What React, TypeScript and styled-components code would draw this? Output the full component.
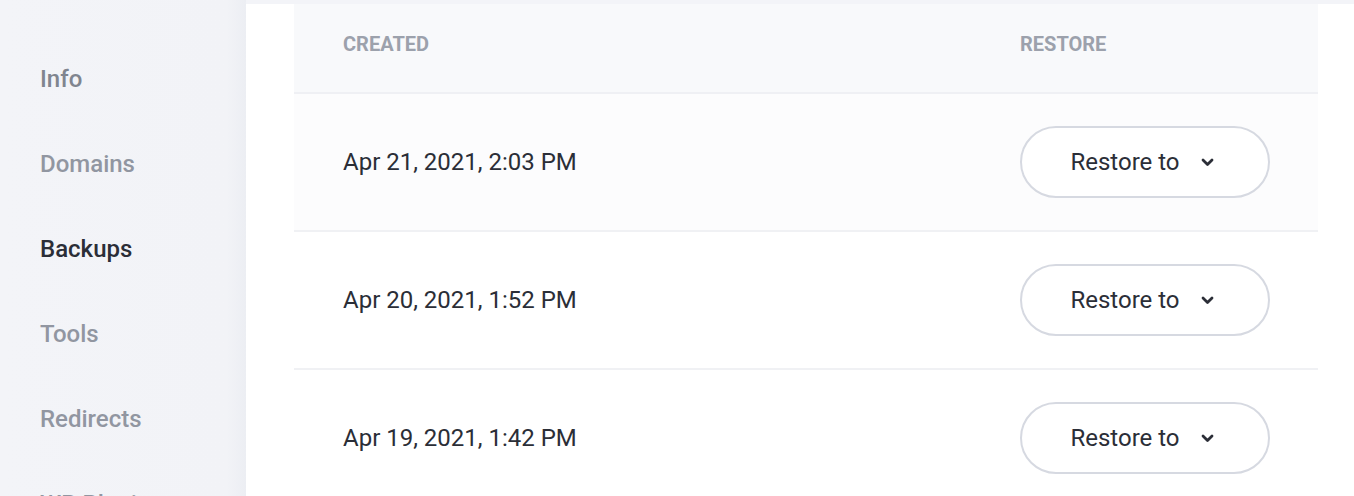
import React from "react";
import styled, { createGlobalStyle } from "styled-components";

const GlobalStyle = createGlobalStyle`
  html, body {
    margin: 0;
    padding: 0;
    background: #f3f4f8;
    font-family: Roboto, "Liberation Sans", sans-serif;
  }
`;

interface Backup {
  created: string;
}

const backups: Backup[] = [
  { created: "Apr 21, 2021, 2:03 PM" },
  { created: "Apr 20, 2021, 1:52 PM" },
  { created: "Apr 19, 2021, 1:42 PM" },
];

type Tone = "muted" | "hover" | "active";

const navItems: { label: string; tone: Tone }[] = [
  { label: "Info", tone: "hover" },
  { label: "Domains", tone: "muted" },
  { label: "Backups", tone: "active" },
  { label: "Tools", tone: "muted" },
  { label: "Redirects", tone: "muted" },
  { label: "WP Plugins", tone: "muted" },
];

const toneColors: Record<Tone, string> = {
  muted: "#9196a1",
  hover: "#80858f",
  active: "#2b2e37",
};

const Chevron = () => (
  <svg width="13" height="9" viewBox="0 0 13 9" fill="none">
    <path d="M2 2L6.5 6.5L11 2" stroke="#2b2e37" strokeWidth="2.8" strokeLinecap="round" strokeLinejoin="round" />
  </svg>
);

const App = () => {
  return (
    <>
      <GlobalStyle />
      <Page>
        <SideBar>
          {navItems.map((item) => (
            <NavItem key={item.label} tone={item.tone}>
              {item.label}
            </NavItem>
          ))}
        </SideBar>

        <Main>
          <Table>
            <HeaderRow>
              <HeadCell>Created</HeadCell>
              <HeadCell>Restore</HeadCell>
            </HeaderRow>
            {backups.map((b, i) => (
              <Row key={b.created} highlight={i === 0}>
                <DateCell>{b.created}</DateCell>
                <ActionCell>
                  <RestoreBtn>
                    Restore to
                    <Chevron />
                  </RestoreBtn>
                </ActionCell>
              </Row>
            ))}
          </Table>
        </Main>
      </Page>
    </>
  );
};
export default App;

const Page = styled.div`
  display: flex;
  width: 1354px;
  height: 496px;
  overflow: hidden;
  background: #f3f4f8;
`;

const SideBar = styled.nav`
  width: 246px;
  flex-shrink: 0;
  display: flex;
  flex-direction: column;
  padding-top: 58px;
  box-sizing: border-box;
  background: linear-gradient(to right, #f3f4f8 0%, #f2f3f7 92%, #eceef3 100%);
`;

const NavItem = styled.div<{ tone: Tone }>`
  flex-shrink: 0;
  height: 85px;
  padding-left: 40px;
  font-size: 24px;
  font-weight: 500;
  line-height: 42px;
  color: ${({ tone }) => toneColors[tone]};
`;

const Main = styled.main`
  flex: 1;
  margin-top: 4px;
  background: #ffffff;
  padding-left: 48px;
  padding-right: 36px;
`;

const Table = styled.div`
  display: flex;
  flex-direction: column;
`;

const gridCols = `grid-template-columns: 726px 1fr;`;

const HeaderRow = styled.div`
  display: grid;
  ${gridCols}
  height: 90px;
  padding-bottom: 9px;
  align-items: center;
  background: #f8f9fb;
  border-bottom: 2px solid #eff0f4;
  box-sizing: border-box;
`;

const HeadCell = styled.div`
  padding-left: 49px;
  font-size: 20px;
  font-weight: 700;
  text-transform: uppercase;
  color: #9ca1ac;
  &:last-child {
    padding-left: 0;
  }
`;

const Row = styled.div<{ highlight?: boolean }>`
  display: grid;
  ${gridCols}
  height: 138px;
  align-items: center;
  background: ${({ highlight }) => (highlight ? "#fcfcfd" : "#ffffff")};
  border-bottom: 2px solid #f0f1f4;
  box-sizing: border-box;
`;

const DateCell = styled.div`
  padding-left: 49px;
  font-size: 24px;
  color: #2b2e37;
`;

const ActionCell = styled.div`
  display: flex;
  align-items: center;
`;

const RestoreBtn = styled.button`
  width: 250px;
  height: 72px;
  display: flex;
  align-items: center;
  justify-content: center;
  gap: 21px;
  padding: 0 6px 0 0;
  background: #ffffff;
  border: 2px solid #d6d9e1;
  border-radius: 36px;
  font-family: Roboto, "Liberation Sans", sans-serif;
  font-size: 24px;
  font-weight: 400;
  color: #2b2e37;
  cursor: pointer;
`;
